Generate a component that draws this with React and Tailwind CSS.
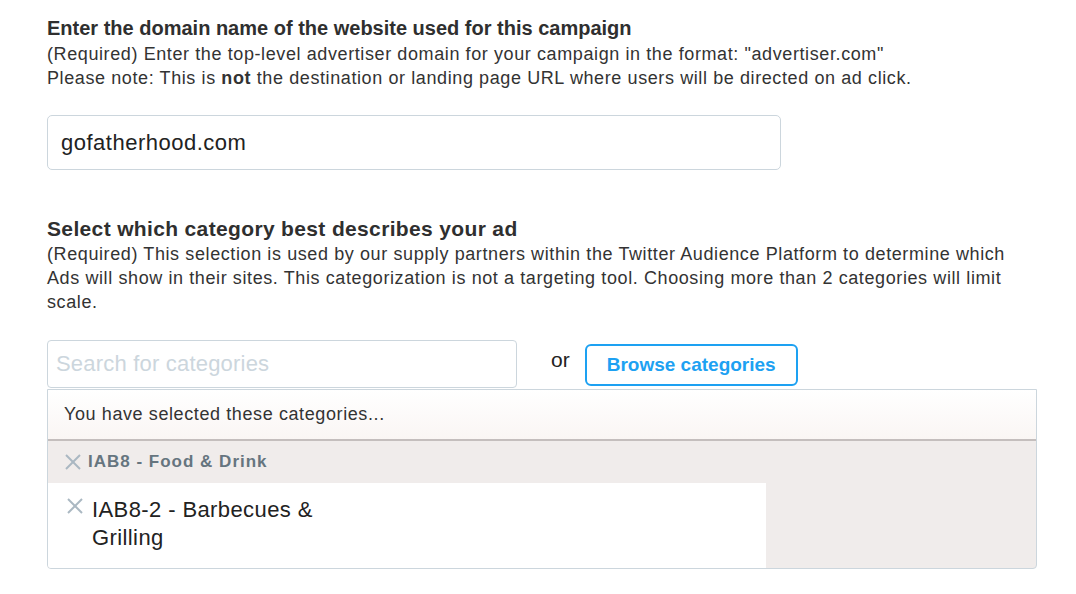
import React from "react";

const XIcon = ({ className }) => (
  <svg viewBox="0 0 18 18" className={className} fill="none" stroke="currentColor" strokeWidth="2">
    <line x1="2" y1="2" x2="16" y2="16" />
    <line x1="16" y1="2" x2="2" y2="16" />
  </svg>
);

const App = () => {
  return (
    <div
      className="bg-white min-h-[594px] w-[1076px] text-[#333] pl-[47px] pt-[15px]"
      style={{ fontFamily: '"Liberation Sans", Arial, sans-serif' }}
    >
      <div className="w-[990px]">
        {/* domain */}
        <h2 className="text-[20px] leading-[26px] font-bold text-[#2f2f2f]">
          Enter the domain name of the website used for this campaign
        </h2>
        <p className="text-[18px] leading-[24px] tracking-[0.6px] text-[#333] mt-[1px]">
          (Required) Enter the top-level advertiser domain for your campaign in the format: "advertiser.com"
          <br />
          Please note: This is <b>not</b> the destination or landing page URL where users will be directed on ad click.
        </p>
        <input
          defaultValue="gofatherhood.com"
          className="mt-[25px] w-[734px] h-[55px] border border-[#ccd6dd] rounded-[5px] px-[13px] text-[22px] tracking-[0.5px] text-[#222] outline-none"
        />

        {/* category */}
        <h2 className="mt-[46px] text-[21px] leading-[26px] font-bold tracking-[0.35px] text-[#2f2f2f]">
          Select which category best describes your ad
        </h2>
        <p className="text-[18px] leading-[24px] tracking-[0.6px] text-[#333]">
          (Required) This selection is used by our supply partners within the Twitter Audience Platform to determine which
          <br />
          Ads will show in their sites. This categorization is not a targeting tool. Choosing more than 2 categories will limit
          <br />
          scale.
        </p>

        <div className="mt-[26px] flex items-start">
          <input
            placeholder="Search for categories"
            className="w-[470px] h-[48px] border border-[#ccd6dd] rounded-[4px] px-[8px] text-[22px] tracking-[0.2px] placeholder:text-[#ccd6dd] outline-none"
          />
          <span className="ml-[34px] mt-[8px] text-[21px] leading-[24px] text-[#222]">or</span>
          <button className="ml-[15px] mt-[4px] w-[213px] h-[42px] border-2 border-[#1da1f2] rounded-[6px] text-[#1da1f2] font-bold text-[19px]">
            Browse categories
          </button>
        </div>

        <div className="mt-[1px] border border-[#ccd6dd] rounded-b-[4px] overflow-hidden bg-[#f0eceb]">
          <div className="h-[51px] bg-gradient-to-b from-white to-[#faf6f4] border-b-2 border-[#c4bebd] flex items-center pl-[16px] text-[18px] tracking-[0.6px] text-[#333]">
            You have selected these categories...
          </div>
          <div className="h-[42px] flex items-center pl-[16px] text-[17px] font-bold tracking-[1px] text-[#66757f]">
            <XIcon className="w-[18px] h-[18px] text-[#aab8c2]" />
            <span className="ml-[6px]">IAB8 - Food &amp; Drink</span>
          </div>
          <div className="w-[718px] h-[85px] bg-white flex items-start pl-[18px] pt-[14px]">
            <XIcon className="w-[18px] h-[18px] text-[#aab8c2]" />
            <span className="ml-[8px] -mt-[1px] w-[250px] text-[22px] leading-[28px] tracking-[0.4px] text-[#222]">
              IAB8-2 - Barbecues &amp; Grilling
            </span>
          </div>
        </div>
      </div>
    </div>
  );
};

export default App;
